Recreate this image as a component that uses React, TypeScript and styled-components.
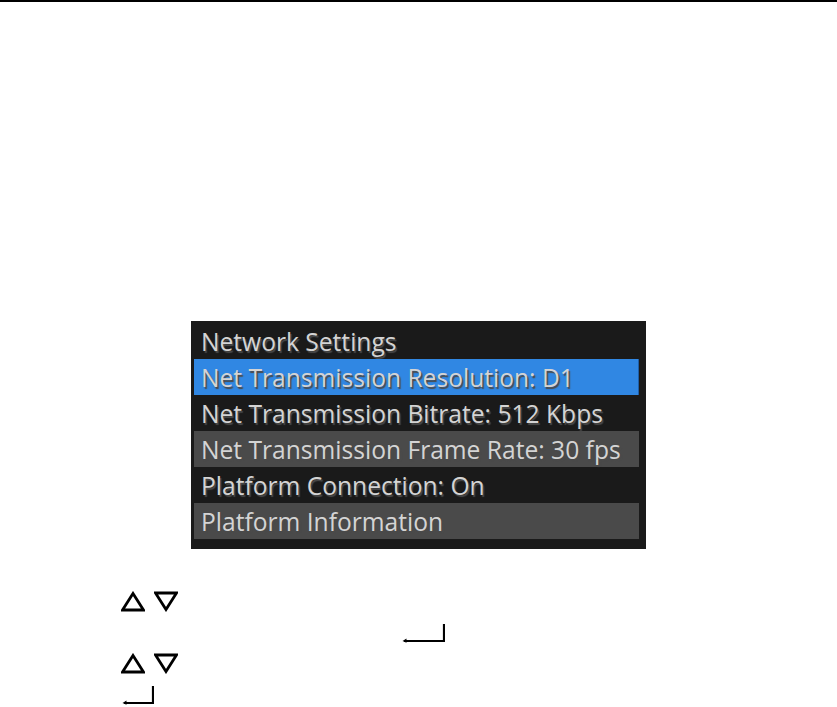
import React from "react";
import styled, { createGlobalStyle } from "styled-components";

const Global = createGlobalStyle`
  html, body { margin: 0; padding: 0; background: #ffffff; }
  body { font-family: "Liberation Sans", Arial, sans-serif; }
`;

const Page = styled.div`
  width: 837px;
  height: 707px;
  border-top: 2px solid #000;
  box-sizing: border-box;
  display: flex;
  flex-direction: column;
  overflow: hidden;
`;

const FigureWrap = styled.div`
  display: flex;
  justify-content: center;
  padding-top: 319px;
`;

const Panel = styled.div`
  width: 455px;
  height: 228px;
  box-sizing: border-box;
  background: #1a1a1a;
  padding: 2px 7px 0 3px;
  display: flex;
  flex-direction: column;
  overflow: hidden;
`;

type Tone = "title" | "selected" | "plain" | "shaded";

const Row = styled.div<{ $tone: Tone }>`
  height: 36px;
  flex: none;
  display: flex;
  align-items: center;
  padding-left: 7px;
  box-sizing: border-box;
  font-family: "Open Sans", "Noto Sans", sans-serif;
  font-size: 24.6px;
  color: #d4d4d4;
  white-space: nowrap;
  text-shadow: 1.5px 2px 1px #4a4a4a;
  background: ${(p) =>
    p.$tone === "selected"
      ? "#3087e3"
      : p.$tone === "shaded"
      ? "#4a4a4a"
      : "transparent"};
  border-right: ${(p) => (p.$tone === "selected" ? "1px solid #1f5fa8" : "none")};
`;

const Steps = styled.div`
  display: flex;
  flex-direction: column;
  padding-top: 37px;
  padding-left: 121px;
`;

const StepLine = styled.div<{ $indent?: number }>`
  height: 31px;
  flex: none;
  display: flex;
  align-items: center;
  gap: 9px;
  padding-left: ${(p) => p.$indent ?? 0}px;
`;

const Up = () => (
  <svg width="24" height="21" viewBox="0 0 24 21">
    <polygon points="12,2.5 22.5,19 1.5,19" fill="none" stroke="#000" strokeWidth="2.8" strokeLinejoin="miter" />
  </svg>
);

const Down = () => (
  <svg width="24" height="21" viewBox="0 0 24 21">
    <polygon points="1.5,2 22.5,2 12,18.5" fill="none" stroke="#000" strokeWidth="2.8" strokeLinejoin="miter" />
  </svg>
);

const Enter = ({ w }: { w: number }) => (
  <svg width={w} height="20" viewBox={`0 0 ${w} 20`}>
    <path d={`M${w - 1} 1 V18 H2`} fill="none" stroke="#000" strokeWidth="2.2" />
    <path d="M0.5 18 L4.5 15.5 V19.8 Z" fill="#000" />
  </svg>
);

const rows: { text: string; tone: Tone }[] = [
  { text: "Network Settings", tone: "title" },
  { text: "Net Transmission Resolution: D1", tone: "selected" },
  { text: "Net Transmission Bitrate: 512 Kbps", tone: "plain" },
  { text: "Net Transmission Frame Rate: 30 fps", tone: "shaded" },
  { text: "Platform Connection: On", tone: "plain" },
  { text: "Platform Information", tone: "shaded" },
];

export default function App() {
  return (
    <>
      <Global />
      <Page>
        <FigureWrap>
          <Panel>
            {rows.map((r) => (
              <Row key={r.text} $tone={r.tone}>
                {r.text}
              </Row>
            ))}
          </Panel>
        </FigureWrap>
        <Steps>
          <StepLine>
            <Up />
            <Down />
          </StepLine>
          <StepLine $indent={281}>
            <Enter w={43} />
          </StepLine>
          <StepLine>
            <Up />
            <Down />
          </StepLine>
          <StepLine $indent={1}>
            <Enter w={32} />
          </StepLine>
        </Steps>
      </Page>
    </>
  );
}
